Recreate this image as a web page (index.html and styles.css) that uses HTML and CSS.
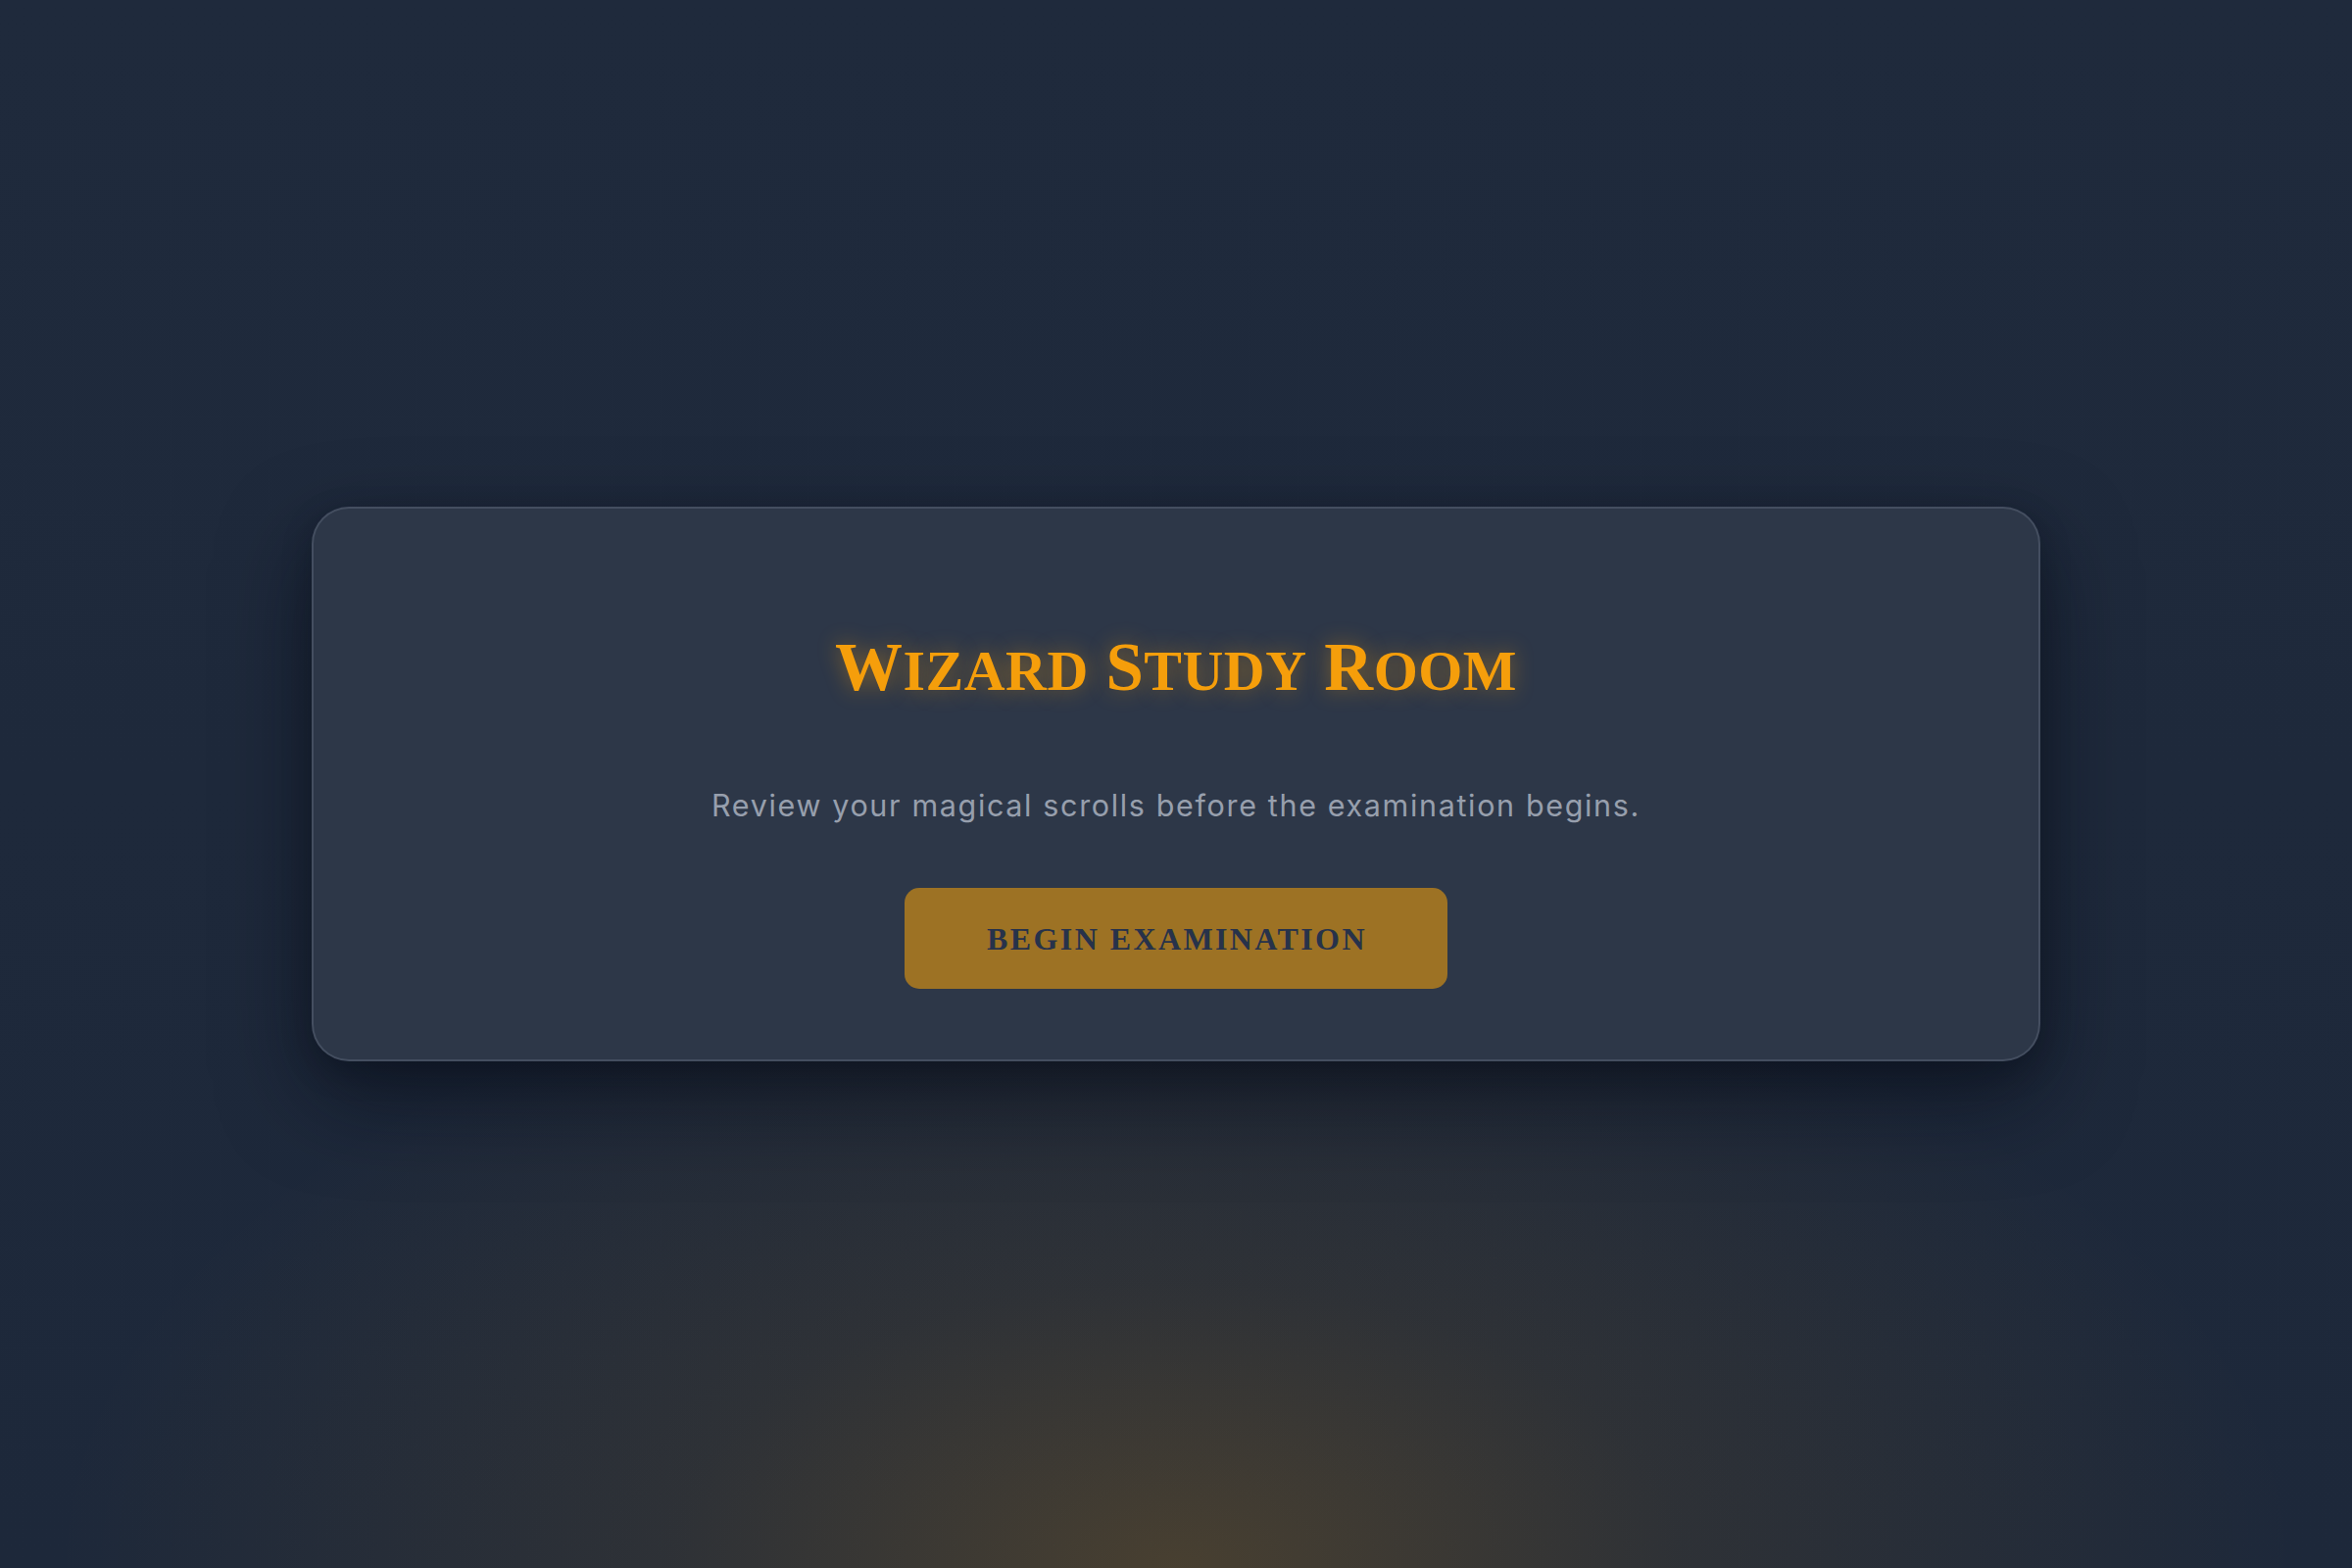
FILE: index.html
```html
<!DOCTYPE html>
<html lang="en">
<head>
<meta charset="utf-8">
<title>Wizard Study Room</title>
<link rel="stylesheet" href="styles.css">
</head>
<body>
  <main class="stage">
    <section class="card">
      <h1 class="title"><span class="cap">W</span><span class="sc">izard</span> <span class="cap">S</span><span class="sc">tudy</span> <span class="cap">R</span><span class="sc">oom</span></h1>
      <p class="subtitle">Review your magical scrolls before the examination begins.</p>
      <button class="begin" type="button">Begin Examination</button>
    </section>
  </main>
</body>
</html>
```

FILE: styles.css
```css
html, body {
  margin: 0;
  padding: 0;
}

body {
  width: 2400px;
  height: 1600px;
  background-color: #1e293b;
  background-image:
    radial-gradient(ellipse 1150px 650px at 50% 100%, rgba(245, 158, 11, 0.2) 0%, rgba(245, 158, 11, 0.08) 45%, rgba(245, 158, 11, 0) 100%),
    linear-gradient(180deg, #1f2a3c 0%, #1d283a 100%);
  overflow: hidden;
}

.stage {
  width: 2400px;
  height: 1600px;
  display: flex;
  align-items: center;
  justify-content: center;
}

.card {
  box-sizing: border-box;
  width: 1764px;
  padding: 128px 80px 72px;
  border: 2px solid rgba(148, 163, 184, 0.22);
  border-radius: 38px;
  background: #2d3748;
  box-shadow: 0 36px 90px rgba(5, 10, 20, 0.55), 0 10px 30px rgba(5, 10, 20, 0.25);
  display: flex;
  flex-direction: column;
  align-items: center;
}

.title {
  margin: 0;
  font-family: "Liberation Serif", "Times New Roman", serif;
  font-weight: 700;
  font-size: 69px;
  line-height: 1;
  color: #f59e0b;
  letter-spacing: 0.5px;
  text-shadow: 0 0 22px rgba(245, 158, 11, 0.45);
  white-space: nowrap;
}

.title .sc {
  text-transform: uppercase;
  font-size: 0.84em;
}

.subtitle {
  margin: 91px 0 0;
  font-family: "Inter", "Noto Sans", sans-serif;
  font-weight: 400;
  font-size: 30.5px;
  line-height: 1;
  color: #979fad;
  letter-spacing: 1.65px;
  white-space: nowrap;
}

.begin {
  margin-top: 69px;
  padding: 36px 82px 35px 84px;
  border: none;
  border-radius: 15px;
  background: #9d7224;
  color: #27324a;
  font-family: "Liberation Serif", "Times New Roman", serif;
  font-weight: 700;
  font-size: 32px;
  line-height: 1;
  letter-spacing: 2.4px;
  text-transform: uppercase;
  cursor: pointer;
}
```
